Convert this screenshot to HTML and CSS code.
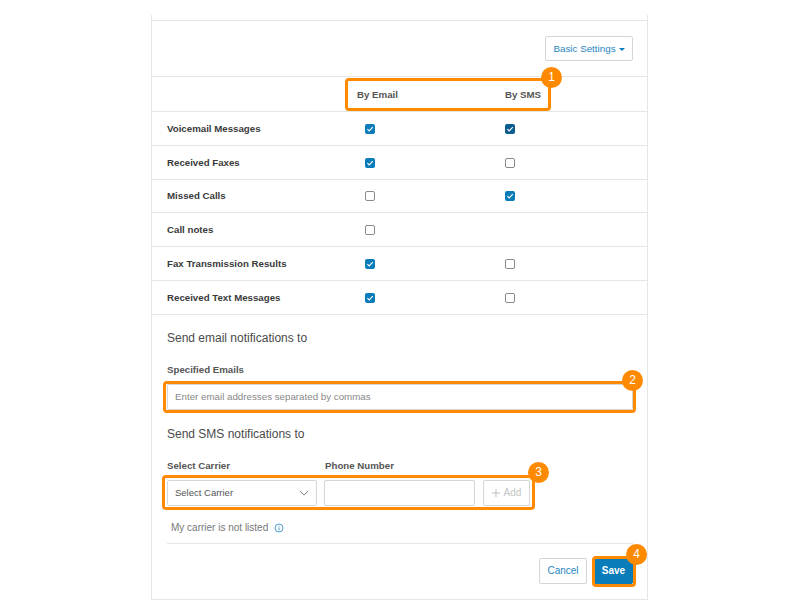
FILE: index.html
```html
<!DOCTYPE html>
<html lang="en">
<head>
    <meta charset="UTF-8">
    <meta name="viewport" content="width=device-width, initial-scale=1.0">
    <title>Notification Settings</title>
    <link rel="stylesheet" href="styles.css">
</head>
<body>
    <div class="panel">
        <div class="toolbar">
            <button class="btn btn-settings">Basic Settings<span class="caret"></span></button>
        </div>

        <div class="row row-head">
            <span></span>
            <span>By Email</span>
            <span>By SMS</span>
        </div>
        <div class="row">
            <span class="row-label">Voicemail Messages</span>
            <span class="check on"><svg viewBox="0 0 10 10"><path d="M2.4 5.2 4.2 7 7.8 3.2"/></svg></span>
            <span class="check on dark sms"><svg viewBox="0 0 10 10"><path d="M2.4 5.2 4.2 7 7.8 3.2"/></svg></span>
        </div>
        <div class="row">
            <span class="row-label">Received Faxes</span>
            <span class="check on"><svg viewBox="0 0 10 10"><path d="M2.4 5.2 4.2 7 7.8 3.2"/></svg></span>
            <span class="check sms"></span>
        </div>
        <div class="row">
            <span class="row-label">Missed Calls</span>
            <span class="check"></span>
            <span class="check on sms"><svg viewBox="0 0 10 10"><path d="M2.4 5.2 4.2 7 7.8 3.2"/></svg></span>
        </div>
        <div class="row">
            <span class="row-label">Call notes</span>
            <span class="check"></span>
        </div>
        <div class="row">
            <span class="row-label">Fax Transmission Results</span>
            <span class="check on"><svg viewBox="0 0 10 10"><path d="M2.4 5.2 4.2 7 7.8 3.2"/></svg></span>
            <span class="check sms"></span>
        </div>
        <div class="row">
            <span class="row-label">Received Text Messages</span>
            <span class="check on"><svg viewBox="0 0 10 10"><path d="M2.4 5.2 4.2 7 7.8 3.2"/></svg></span>
            <span class="check sms"></span>
        </div>

        <div class="form">
            <h3>Send email notifications to</h3>
            <label class="field-label">Specified Emails</label>
            <input type="text" class="input input-email" placeholder="Enter email addresses separated by commas">

            <h3 class="sms-title">Send SMS notifications to</h3>
            <div class="carrier-labels">
                <label class="field-label">Select Carrier</label>
                <label class="field-label">Phone Number</label>
            </div>
            <div class="carrier-row">
                <div class="select">
                    Select Carrier
                    <svg viewBox="0 0 12 7" class="chevron"><path d="M1 1 6 6 11 1"/></svg>
                </div>
                <input type="text" class="input input-phone">
                <button class="btn btn-add">
                    <svg viewBox="0 0 9 9" class="plus"><path d="M4.5 0V9M0 4.5H9"/></svg>
                    Add
                </button>
            </div>
            <p class="hint">
                My carrier is not listed
                <svg viewBox="0 0 10 10" class="info"><circle cx="5" cy="5" r="4"/><path d="M5 4.4V7.4M5 2.6V3.6"/></svg>
            </p>
            <div class="actions">
                <button class="btn btn-cancel">Cancel</button>
                <button class="btn btn-save">Save</button>
            </div>
        </div>

        <div class="ring ring-1"><span class="badge">1</span></div>
        <div class="ring ring-2"><span class="badge">2</span></div>
        <div class="ring ring-3"><span class="badge">3</span></div>
        <div class="ring ring-4"><span class="badge">4</span></div>
    </div>
</body>
</html>
```
FILE: styles.css
```css
body {
    font-family: "Liberation Sans", Arial, sans-serif;
    background-color: #fff;
    color: #333;
    margin: 0;
    padding: 0;
}
.panel {
    position: relative;
    box-sizing: border-box;
    width: 497px;
    height: 585px;
    margin: 15px 0 0 151px;
    padding-top: 5px;
    border-left: 1px solid #e6e6e6;
    border-right: 1px solid #e6e6e6;
    border-bottom: 1px solid #e6e6e6;
}
.toolbar {
    display: flex;
    align-items: flex-start;
    justify-content: flex-end;
    box-sizing: border-box;
    height: 56px;
    padding: 15px 14px 0 0;
    border-top: 1px solid #e6e6e6;
}
.btn {
    box-sizing: border-box;
    height: 26px;
    padding: 0;
    background: #fff;
    border: 1px solid #d5d5d5;
    border-radius: 2px;
    color: #1f86c0;
    font-family: inherit;
    font-size: 10px;
}
.btn-settings {
    width: 88px;
    height: 25px;
    font-size: 9.8px;
}
.caret {
    display: inline-block;
    margin-left: 3px;
    vertical-align: 1px;
    border-top: 3px solid #0a7cba;
    border-left: 3px solid transparent;
    border-right: 3px solid transparent;
}
.row {
    display: grid;
    grid-template-columns: 190px 148px 1fr;
    align-items: center;
    box-sizing: border-box;
    height: 33.8px;
    padding-left: 15px;
    border-top: 1px solid #e6e6e6;
}
.row-head {
    height: 35px;
    color: #555;
    font-size: 9.7px;
    font-weight: bold;
}
.row-label {
    font-size: 9.7px;
    font-weight: bold;
    color: #3a3a3a;
}
.check {
    box-sizing: border-box;
    display: block;
    width: 10px;
    height: 10px;
    margin: 1px 0 0 8px;
    background: #fff;
    border: 1px solid #8a8a8a;
    border-radius: 2px;
}
.check.sms {
    margin-left: 0;
}
.check.on {
    background: #0a7cba;
    border: none;
}
.check.dark {
    background: #0b5c8f;
}
.check svg {
    display: block;
    width: 10px;
    height: 10px;
    fill: none;
    stroke: #fff;
    stroke-width: 1.1;
}
.form {
    border-top: 1px solid #e6e6e6;
    padding: 16px 14px 0 15px;
}
h3 {
    margin: 0 0 19px;
    font-size: 12px;
    line-height: 14px;
    font-weight: normal;
    color: #4a4a4a;
}
.field-label {
    display: block;
    font-size: 9.7px;
    font-weight: bold;
    line-height: 12px;
    color: #555;
}
.input {
    box-sizing: border-box;
    height: 26px;
    padding: 0 7px;
    background: #fff;
    border: 1px solid #d5d5d5;
    border-radius: 2px;
    font-family: inherit;
    font-size: 9.75px;
}
.input::placeholder {
    color: #888;
}
.input-email {
    display: block;
    width: 100%;
    margin-top: 8px;
}
.sms-title {
    margin: 17px 0 21px;
}
.carrier-labels {
    display: grid;
    grid-template-columns: 158px 1fr;
    margin-top: -2px;
}
.carrier-row {
    display: flex;
    margin-top: 8px;
}
.select {
    display: flex;
    align-items: center;
    justify-content: space-between;
    box-sizing: border-box;
    width: 150px;
    height: 26px;
    padding: 0 7px;
    border: 1px solid #d5d5d5;
    border-radius: 2px;
    font-size: 9.5px;
    color: #555;
}
.chevron {
    width: 10px;
    height: 6px;
    fill: none;
    stroke: #666;
    stroke-width: 1;
}
.input-phone {
    width: 151px;
    margin-left: 7px;
}
.btn-add {
    display: flex;
    align-items: center;
    justify-content: center;
    gap: 4px;
    width: 47px;
    margin-left: 8px;
    color: #c4c4c4;
}
.plus {
    width: 8px;
    height: 8px;
    fill: none;
    stroke: #b8b8b8;
    stroke-width: 1;
}
.hint {
    display: flex;
    align-items: center;
    gap: 6px;
    margin: 0;
    padding: 16px 0 9px 4px;
    border-bottom: 1px solid #e6e6e6;
    font-size: 10px;
    line-height: 12px;
    color: #777;
}
.info {
    width: 10px;
    height: 10px;
    fill: none;
    stroke: #3d93cc;
    stroke-width: 0.9;
}
.actions {
    display: flex;
    justify-content: flex-end;
    gap: 7px;
    margin-top: 14px;
}
.btn-cancel {
    width: 48px;
}
.btn-save {
    width: 39px;
    background: #0a7cba;
    border-color: #0a7cba;
    color: #fff;
    font-weight: bold;
}
.ring {
    position: absolute;
    box-sizing: border-box;
    border: 3px solid #ff8a00;
    border-radius: 4px;
}
.ring-1 {
    left: 193px;
    top: 63px;
    width: 206px;
    height: 33px;
}
.ring-2 {
    left: 11px;
    top: 366px;
    width: 473px;
    height: 32px;
}
.ring-3 {
    left: 10px;
    top: 460px;
    width: 373px;
    height: 35px;
}
.ring-4 {
    left: 440px;
    top: 541px;
    width: 44px;
    height: 31px;
}
.badge {
    position: absolute;
    top: -14px;
    right: -14px;
    width: 21px;
    height: 21px;
    border-radius: 50%;
    background: #ff8a00;
    color: #fff;
    font-size: 12px;
    line-height: 21px;
    text-align: center;
}
.ring-2 .badge {
    right: -10px;
}
.ring-3 .badge {
    top: -16px;
    right: -17px;
}
.ring-4 .badge {
    top: -15px;
}
```
